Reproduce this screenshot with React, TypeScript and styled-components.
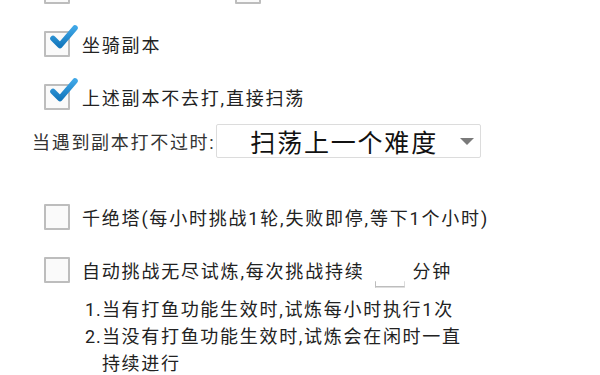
import React from 'react';
import styled, { createGlobalStyle } from 'styled-components';

const GlobalStyle = createGlobalStyle`
	html, body {
		margin: 0;
		padding: 0;
		background: #ffffff;
		overflow: hidden;
	}
	body {
		font-family: Roboto, "Noto Sans CJK SC", "Noto Sans", sans-serif;
		color: #222222;
	}
`;

type CheckProps = { checked?: boolean };

function CheckBox({ checked }: CheckProps) {
	return (
		<View.Box>
			{checked && (
				<View.Tick viewBox="0 0 30 30" width={30} height={30}>
					<defs>
						<linearGradient id="tickGrad" x1="0" y1="0" x2="0" y2="1">
							<stop offset="0" stopColor="#3ea6e6" />
							<stop offset="1" stopColor="#1478bd" />
						</linearGradient>
					</defs>
					<path
						d="M4 14.5 L11 21.5 L26 4"
						fill="none"
						stroke="url(#tickGrad)"
						strokeWidth={5.6}
						strokeLinecap="round"
						strokeLinejoin="round"
					/>
				</View.Tick>
			)}
		</View.Box>
	);
}

type ItemProps = { label?: string; checked?: boolean; children?: React.ReactNode };

function CheckItem({ label, checked, children }: ItemProps) {
	return (
		<View.Item>
			<CheckBox checked={checked} />
			{label && <Text.Label>{label}</Text.Label>}
			{children}
		</View.Item>
	);
}

const notes = [
	{ no: '1.', text: '当有打鱼功能生效时,试炼每小时执行1次' },
	{ no: '2.', text: '当没有打鱼功能生效时,试炼会在闲时一直持续进行' },
];

export default function App() {
	return (
		<>
			<GlobalStyle />
			<View.Page>
				<View.Row>
					<CheckItem />
					<View.Spacer />
					<CheckItem />
				</View.Row>
				<View.Row>
					<CheckItem label="坐骑副本" checked />
				</View.Row>
				<View.Row>
					<CheckItem label="上述副本不去打,直接扫荡" checked />
				</View.Row>
				<View.SelectRow>
					<Text.SelectLabel>当遇到副本打不过时:</Text.SelectLabel>
					<View.Select>
						<Text.SelectValue>扫荡上一个难度</Text.SelectValue>
						<View.Arrow />
					</View.Select>
				</View.SelectRow>
				<View.Row gapTop={31}>
					<CheckItem label="千绝塔(每小时挑战1轮,失败即停,等下1个小时)" />
				</View.Row>
				<View.Row>
					<CheckItem label="自动挑战无尽试炼,每次挑战持续">
						<View.Input />
						<Text.Label>分钟</Text.Label>
					</CheckItem>
				</View.Row>
				<View.Notes>
					{notes.map((n) => (
						<View.Note key={n.no}>
							<Text.NoteNo>{n.no}</Text.NoteNo>
							<Text.NoteText>{n.text}</Text.NoteText>
						</View.Note>
					))}
				</View.Notes>
			</View.Page>
		</>
	);
}

const View = {
	Page: styled.div`
		width: 600px;
		display: flex;
		flex-direction: column;
		margin-top: -36px;
	`,
	Row: styled.div<{ gapTop?: number }>`
		height: 53px;
		display: flex;
		align-items: center;
		padding-left: 44px;
		margin-top: ${(p) => p.gapTop || 0}px;
		flex-shrink: 0;
	`,
	Spacer: styled.div`
		width: 153px;
	`,
	Item: styled.div`
		display: flex;
		align-items: center;
	`,
	Box: styled.div`
		position: relative;
		width: 22px;
		height: 22px;
		border: 2px solid #bdbdbd;
		border-radius: 1px;
		background: #fafafa;
		margin-right: 12px;
		flex-shrink: 0;
	`,
	Tick: styled.svg`
		position: absolute;
		left: 3px;
		top: -9px;
		overflow: visible;
	`,
	SelectRow: styled.div`
		height: 36px;
		display: flex;
		align-items: center;
		padding-left: 32px;
		flex-shrink: 0;
	`,
	Select: styled.div`
		width: 265px;
		height: 34px;
		border: 1px solid #dcdcdc;
		border-radius: 2px;
		display: flex;
		align-items: center;
		justify-content: space-between;
		padding: 0 5px 0 33px;
		box-sizing: border-box;
		margin-left: 1px;
	`,
	Arrow: styled.div`
		width: 0;
		height: 0;
		border-left: 7px solid transparent;
		border-right: 7px solid transparent;
		border-top: 7px solid #7a7a7a;
		margin-right: 1px;
	`,
	Input: styled.div`
		width: 30px;
		height: 22px;
		margin: 14px 8px 0 10px;
		border: 2px solid #bdbdbd;
		border-top: none;
		border-left-width: 1px;
		border-right-width: 1px;
		box-sizing: border-box;
		clip-path: polygon(0 72%, 100% 72%, 100% 100%, 0 100%);
	`,
	Notes: styled.div`
		padding-left: 85px;
		display: flex;
		flex-direction: column;
	`,
	Note: styled.div`
		display: flex;
		width: 384px;
	`,
};

const Text = {
	Label: styled.span`
		font-size: 18px;
		letter-spacing: 1.8px;
		color: #222222;
		white-space: nowrap;
	`,
	SelectLabel: styled.span`
		font-size: 18px;
		letter-spacing: 1.7px;
		color: #333333;
		white-space: nowrap;
	`,
	SelectValue: styled.span`
		font-size: 25px;
		letter-spacing: 1.8px;
		color: #111111;
		white-space: nowrap;
	`,
	NoteNo: styled.span`
		font-size: 18px;
		line-height: 27px;
		letter-spacing: 1px;
		color: #222222;
		flex-shrink: 0;
	`,
	NoteText: styled.span`
		font-size: 18px;
		line-height: 27px;
		letter-spacing: 1.7px;
		color: #222222;
	`,
};
